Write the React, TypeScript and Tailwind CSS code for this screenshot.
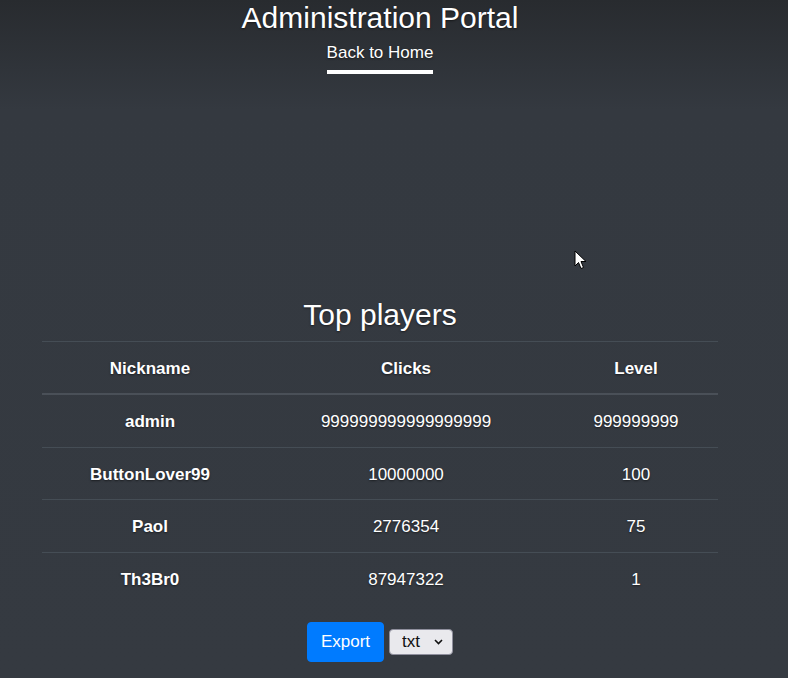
import React from 'react';

// Admin portal: leaderboard + export
const players = [
  { nick: 'admin', clicks: '999999999999999999', level: '999999999' },
  { nick: 'ButtonLover99', clicks: '10000000', level: '100' },
  { nick: 'Paol', clicks: '2776354', level: '75' },
  { nick: 'Th3Br0', clicks: '87947322', level: '1' },
];

const shadow = '[text-shadow:0_1px_2px_rgba(0,0,0,0.5)]';

const Cursor = () => (
  <svg className="absolute left-[574px] top-[250px]" width="13" height="20" viewBox="0 0 13 20">
    <path d="M1 1 L1 16 L4.5 12.5 L7 18.5 L9.5 17.5 L7 11.5 L12 11.5 Z" fill="#fff" stroke="#000" strokeWidth="1" strokeLinejoin="round" />
  </svg>
);

export default function App() {
  return (
    <div className="relative min-h-[678px] w-full bg-[linear-gradient(to_bottom,#282b2f_0px,#343940_110px,#353a41_678px)] text-white font-['Liberation_Sans',Arial,sans-serif] text-[17px] leading-[25.5px]">
      <div className="w-[760px] flex flex-col items-center">
        <header className="flex flex-col items-center">
          <h3 className={`text-[30px] leading-[36px] font-normal ${shadow}`}>Administration Portal</h3>
          <nav className="flex justify-center">
            <a className={`pt-[4px] pb-[4px] border-b-4 border-white text-white ${shadow}`} href="#">Back to Home</a>
          </nav>
        </header>

        <h2 className={`mt-[223px] text-[30px] leading-[36px] font-normal ${shadow}`}>Top players</h2>

        <table className={`mt-[8px] w-[676px] border-collapse text-center ${shadow}`}>
          <thead>
            <tr>
              <th className="w-[216px] border-t border-b-2 border-t-[#454d55] border-b-[#4a5058] pt-[14px] pb-[12px] font-bold">Nickname</th>
              <th className="w-[296px] border-t border-b-2 border-t-[#454d55] border-b-[#4a5058] pt-[14px] pb-[12px] font-bold">Clicks</th>
              <th className="border-t border-b-2 border-t-[#454d55] border-b-[#4a5058] pt-[14px] pb-[12px] font-bold">Level</th>
            </tr>
          </thead>
          <tbody>
            {players.map((p) => (
              <tr key={p.nick}>
                <th className="border-t border-[#454d55] pt-[14px] pb-[12px] font-bold">{p.nick}</th>
                <td className="border-t border-[#454d55] pt-[14px] pb-[12px]">{p.clicks}</td>
                <td className="border-t border-[#454d55] pt-[14px] pb-[12px]">{p.level}</td>
              </tr>
            ))}
          </tbody>
        </table>

        <div className="mt-[18px] flex items-center gap-[5px]">
          <button className="h-[40px] px-[13px] rounded-[4px] bg-[#007bff] border border-[#007bff] text-white">Export</button>
          <div className="relative">
            <select className="appearance-none h-[26px] w-[64px] pl-[12px] pr-[20px] rounded-[4px] bg-[#e9e9ed] border border-[#8f8f9d] text-[#111] text-[17px] leading-[20px]">
              <option>txt</option>
            </select>
            <svg className="absolute right-[10px] top-[10px] pointer-events-none" width="9" height="6" viewBox="0 0 9 6">
              <path d="M1 1 L4.5 4.5 L8 1" fill="none" stroke="#111" strokeWidth="1.6" />
            </svg>
          </div>
        </div>
      </div>
      <Cursor />
    </div>
  );
}
